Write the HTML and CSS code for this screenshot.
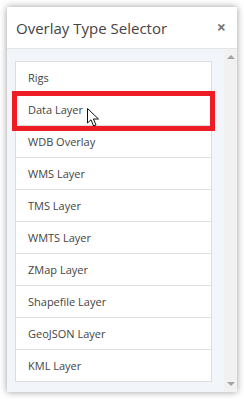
FILE: index.html
```html
<!DOCTYPE html>
<html lang="en">
<head>
  <meta charset="UTF-8">
  <title>Overlay Type Selector</title>
  <link rel="stylesheet" href="styles.css">
</head>
<body>

<div class="dialog">
  <div class="dialog-header">
    <h2>Overlay Type Selector</h2>
    <span class="close">&times;</span>
  </div>
  <div class="dialog-body">
    <div class="list-wrap">
      <ul class="type-list">
        <li>Rigs</li>
        <li>Data Layer</li>
        <li>WDB Overlay</li>
        <li>WMS Layer</li>
        <li>TMS Layer</li>
        <li>WMTS Layer</li>
        <li>ZMap Layer</li>
        <li>Shapefile Layer</li>
        <li>GeoJSON Layer</li>
        <li>KML Layer</li>
      </ul>
      <div class="highlight"></div>
      <svg class="pointer" width="13" height="19" viewBox="0 0 13 19">
        <path d="M0.5 0.5 L0.5 15 L4 11.8 L6.6 18 L9 17 L6.4 11 L11.5 11 Z" fill="#fff" stroke="#111" stroke-width="1" stroke-linejoin="round"/>
      </svg>
    </div>
    <div class="scrollbar">
      <span class="arrow up"></span>
      <span class="arrow down"></span>
    </div>
  </div>
</div>

</body>
</html>
```
FILE: styles.css
```css
body { margin: 0; background: #fff; font-family: "Open Sans", Arial, sans-serif; }
.dialog { width: 230px; height: 385px; margin: 7px; background: #fff; box-shadow: 0 0 7px rgba(0,0,0,0.4); display: flex; flex-direction: column; }
.dialog-header { height: 42px; border-bottom: 1px solid #e5e5e5; display: flex; align-items: center; justify-content: space-between; padding: 0 11px 0 9px; }
.dialog-header h2 { margin: 0; font-size: 15px; font-weight: normal; color: #444; }
.close { font-size: 16px; font-weight: bold; color: #777; line-height: 1; margin-top: -2px; }
.dialog-body { flex: 1; background: #f2f6fa; display: flex; }
.list-wrap { position: relative; flex: 1; padding: 12px 12px 10px 8px; }
.type-list { list-style: none; margin: 0; padding: 0; background: #fff; border: 1px solid #ddd; }
.type-list li { height: 31px; line-height: 31px; padding-left: 12px; font-size: 11px; color: #444; border-top: 1px solid #ddd; }
.type-list li:first-child { height: 31px; border-top: none; }
.highlight { position: absolute; left: 5px; top: 42px; width: 193px; height: 30px; border: 5px solid #ee1c25; }
.pointer { position: absolute; left: 80px; top: 59px; }
.scrollbar { width: 13px; background: #f1f1f1; display: flex; flex-direction: column; justify-content: space-between; align-items: center; padding: 6px 0; }
.arrow { width: 0; height: 0; border-left: 4px solid transparent; border-right: 4px solid transparent; }
.arrow.up { border-bottom: 4px solid #a3a3a3; }
.arrow.down { border-top: 4px solid #a3a3a3; }
```
